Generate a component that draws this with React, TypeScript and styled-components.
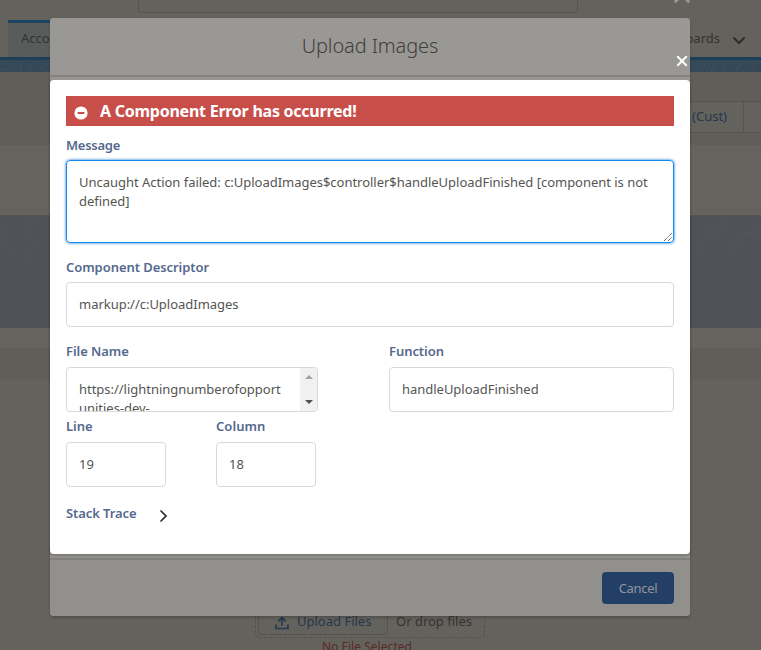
import React from "react";
import styled, { createGlobalStyle } from "styled-components";

const GlobalStyle = createGlobalStyle`
  *, *::before, *::after { box-sizing: border-box; }
  body {
    margin: 0;
    overflow: hidden;
    font-family: "Noto Sans", "Open Sans", sans-serif;
    font-size: 13px;
    line-height: 19px;
    color: #4a4a48;
  }
`;

/* ---------- dimmed page ---------- */

const Screen = styled.div`
  position: relative;
  width: 761px;
  height: 650px;
  overflow: hidden;
  background: #64625d;
`;

const Page = styled.div`
  display: flex;
  flex-direction: column;
  height: 650px;
  > * { flex: none; }
`;

const SearchBar = styled.div`
  display: flex;
  height: 20px;
  padding-left: 138px;
`;

const SearchField = styled.div`
  width: 440px;
  height: 13px;
  border: 1px solid #55544f;
  border-top: 0;
  border-radius: 0 0 4px 4px;
`;

const NavBar = styled.div`
  display: flex;
  justify-content: space-between;
  height: 37px;
  padding: 0 15px 0 8px;
`;

const NavTab = styled.div`
  width: 110px;
  padding: 6px 13px;
  border-top: 3px solid #1d4461;
  background: #595c5a;
  color: #343433;
`;

const NavMenu = styled.div`
  display: flex;
  align-items: center;
  gap: 12px;
  color: #333331;
  svg { display: block; margin-top: 3px; }
`;

const BrandStrip = styled.div`
  height: 15px;
  border-top: 3px solid #1d4059;
  background: #344858;
  svg { display: block; }
`;

const Toolbar = styled.div`
  display: flex;
  justify-content: flex-end;
  height: 73px;
  padding-top: 29px;
  background: #605e59;
`;

const ToolbarCell = styled.div<{ $width: number }>`
  width: ${(p) => p.$width}px;
  height: 32px;
  padding: 5px 16px 0 0;
  border: solid #54534f;
  border-width: 1px 1px 1px 0;
  background: #64625d;
  color: #27374c;
  text-align: right;
  &:last-child { border-right: 0; }
`;

const Band = styled.div<{ $height: number; $color: string; $edge?: string }>`
  height: ${(p) => p.$height}px;
  background: ${(p) => p.$color};
  border-top: 1px solid ${(p) => p.$edge ?? p.$color};
  svg { display: block; }
`;

const UploadArea = styled.div`
  display: flex;
  flex-direction: column;
  align-items: center;
  width: 230px;
  margin: 220px 0 0 255px;
`;

const DropZone = styled.div`
  display: flex;
  gap: 8px;
  width: 230px;
  height: 38px;
  padding: 2px;
  border: 1px dashed #55534f;
  border-radius: 4px;
  color: #343331;
`;

const UploadButton = styled.div`
  display: flex;
  gap: 8px;
  width: 130px;
  height: 32px;
  padding: 8px 0 0 16px;
  border: 1px solid #55534f;
  border-radius: 4px;
  color: #26384f;
  svg { margin-top: 4px; }
`;

const DropHint = styled.span`
  padding-top: 9px;
`;

const UploadError = styled.div`
  margin: -1px 0 0 -6px;
  color: #592a28;
  font-size: 12px;
  letter-spacing: 0.05px;
  white-space: nowrap;
`;

/* ---------- dimmed upload dialog ---------- */

const UploadDialog = styled.section`
  position: absolute;
  left: 50px;
  top: 18px;
  display: flex;
  flex-direction: column;
  justify-content: space-between;
  width: 640px;
  height: 598px;
  border-radius: 4px;
  background: #979592;
  box-shadow: 0 2px 3px rgba(0, 0, 0, 0.2);
`;

const UploadHeader = styled.header`
  height: 59px;
  padding-top: 14px;
  border-bottom: 2px solid #858380;
  border-radius: 4px 4px 0 0;
  background: #9a9895;
  color: #3f3f3d;
  font-size: 20px;
  font-weight: 300;
  letter-spacing: -0.1px;
  line-height: 28px;
  text-align: center;
`;

const UploadFooter = styled.footer`
  display: flex;
  justify-content: flex-end;
  height: 58px;
  padding: 12px 16px;
  border-top: 2px solid #82807d;
  border-radius: 0 0 4px 4px;
  background: #92908d;
`;

const CancelButton = styled.button`
  width: 72px;
  height: 32px;
  padding: 0;
  border: 0;
  border-radius: 4px;
  background: #233f66;
  color: #92969b;
  font: inherit;
  letter-spacing: -0.3px;
`;

const CloseButton = styled.div<{ $left: number; $top: number; $color: string }>`
  position: absolute;
  left: ${(p) => p.$left}px;
  top: ${(p) => p.$top}px;
  color: ${(p) => p.$color};
  svg { display: block; }
`;

/* ---------- error dialog ---------- */

const ErrorDialog = styled.section`
  position: absolute;
  left: 50px;
  top: 80px;
  width: 640px;
  height: 474px;
  padding: 16px;
  border-radius: 4px;
  background: #fff;
  box-shadow: 0 2px 3px rgba(0, 0, 0, 0.2);
`;

const ErrorBanner = styled.div`
  display: flex;
  align-items: center;
  gap: 12px;
  height: 30px;
  padding-left: 8px;
  background: #c84e4a;
  color: #fff;
  font-size: 16px;
  font-weight: 700;
  white-space: nowrap;
  svg { margin-top: 4px; }
`;

const BannerText = styled.span`
  letter-spacing: -0.25px;
`;

const Row = styled.div<{ $gap?: number; $top: number }>`
  display: flex;
  gap: ${(p) => p.$gap ?? 0}px;
  margin-top: ${(p) => p.$top}px;
`;

const Field = styled.div<{ $width: number }>`
  width: ${(p) => p.$width}px;
`;

const Label = styled.div<{ $spacing?: number }>`
  height: 19px;
  color: #54698d;
  font-weight: 600;
  letter-spacing: ${(p) => p.$spacing ?? -0.06}px;
`;

const Box = styled.div<{ $height: number; $focused?: boolean; $top?: number }>`
  position: relative;
  display: flex;
  height: ${(p) => p.$height}px;
  margin-top: ${(p) => p.$top ?? 6}px;
  padding: 12px 0 0 12px;
  border: 1px solid ${(p) => (p.$focused ? "#1589ee" : "#dad9d8")};
  border-radius: 4px;
  box-shadow: ${(p) => (p.$focused ? "0 0 3px #0070d2" : "none")};
  overflow: hidden;
  color: #555552;
  letter-spacing: -0.025px;
  white-space: pre;
`;

const ResizeGrip = styled.svg`
  position: absolute;
  right: 0;
  bottom: 0;
`;

const Scrollbar = styled.div`
  display: flex;
  flex-direction: column;
  justify-content: space-between;
  align-items: center;
  width: 17px;
  height: 43px;
  margin: -12px 0 0 auto;
  padding: 7px 0;
  background: #f1f1f1;
`;

const StackTrace = styled.div`
  display: flex;
  gap: 22px;
  margin-top: 17px;
  svg { margin-top: 5px; }
`;

const CloseIcon = ({ size = 12 }: { size?: number }) => (
  <svg width={size} height={size} viewBox="0 0 12 12" fill="none" stroke="currentColor" strokeWidth="2" strokeLinecap="round">
    <path d="M1.8 1.8 10.2 10.2M10.2 1.8 1.8 10.2" />
  </svg>
);

export default function App() {
  return (
    <Screen>
      <GlobalStyle />
      <Page>
        <SearchBar><SearchField /></SearchBar>
        <NavBar>
          <NavTab>Accounts</NavTab>
          <NavMenu>
            <span>Dashboards</span>
            <svg width="14" height="9" viewBox="0 0 14 9" fill="none" stroke="#2d2d2c" strokeWidth="2" strokeLinecap="round">
              <path d="M2 2l5 5 5-5" />
            </svg>
          </NavMenu>
        </NavBar>
        <BrandStrip>
          <svg width="761" height="12" fill="none" stroke="#435461" strokeWidth="0.7">
            <path d="M0 10c8 2 15-3 18-9M4 3l3 2m4-2l-2 3M24 1c-4 3-4 7-2 11M29 12c1-5 4-9 10-11M39 11l10-9M692 9q6-1 8-8M699 12q2-7 5-11M703 12q2-7 4-11M707 12q2-7 4-11M711 12q2-7 4-11M715 12q2-7 5-11M724 12q0-8 6-11M736 11q0-7 14-9M748 11q9-4 7-10" />
          </svg>
        </BrandStrip>
        <Toolbar>
          <ToolbarCell $width={110}>(Cust)</ToolbarCell>
          <ToolbarCell $width={17} />
        </Toolbar>
        <Band $height={70} $color="#65635e" />
        <Band $height={113} $color="#4f5358" $edge="#54534f">
          <svg width="761" height="70" fill="none" stroke="#52575a" strokeWidth="0.9">
            <path d="M0 9q12 6 4 17l-4 4M7 43q10-24 25 2M26 12q5-8 16-8M29 17q4 14 16 17M697 38q1-25 15-18 8 4 16-15M703 12q15 3 19-8M731 40q0-25 16-24 8 2 14-4M735 32q5-18 26-15" />
            <path d="M27 4q-5 12 5 23M701 31l50-2M727 7h28" strokeDasharray="4 4" />
          </svg>
        </Band>
        <Band $height={20} $color="#65635e" />
        <Band $height={32} $color="#605e59" />
        <UploadArea>
          <DropZone>
            <UploadButton>
              <svg width="14" height="14" viewBox="0 0 14 14" fill="none" stroke="currentColor" strokeWidth="1.7" strokeLinecap="round" strokeLinejoin="round">
                <path d="M1 9v3.5h12V9M7 9V1.8M3.8 4.8 7 1.5l3.2 3.3" />
              </svg>
              <span>Upload Files</span>
            </UploadButton>
            <DropHint>Or drop files</DropHint>
          </DropZone>
          <UploadError>No File Selected</UploadError>
        </UploadArea>
      </Page>

      <CloseButton $left={673} $top={-14} $color="#999793"><CloseIcon size={18} /></CloseButton>
      <UploadDialog>
        <UploadHeader>Upload Images</UploadHeader>
        <UploadFooter><CancelButton>Cancel</CancelButton></UploadFooter>
      </UploadDialog>

      <CloseButton $left={676} $top={55} $color="#fff"><CloseIcon /></CloseButton>
      <ErrorDialog>
        <ErrorBanner>
          <svg width="14" height="14" viewBox="0 0 14 14">
            <circle cx="7" cy="7" r="6.6" fill="#fff" />
            <rect x="3.5" y="6" width="7" height="2" rx="0.8" fill="#c84e4a" />
          </svg>
          <BannerText>A Component Error has occurred!</BannerText>
        </ErrorBanner>

        <Row $top={10}>
          <Field $width={608}>
            <Label $spacing={-0.25}>Message</Label>
            <Box $height={83} $focused $top={5}>
              <span>{"Uncaught Action failed: c:UploadImages$controller$handleUploadFinished [component is not\ndefined]"}</span>
              <ResizeGrip width="12" height="12" viewBox="0 0 12 12" stroke="#555" strokeWidth="1" strokeDasharray="1.2 0.5">
                <path d="M3 11 11 3M7 11l4-4" />
              </ResizeGrip>
            </Box>
          </Field>
        </Row>

        <Row $top={15}>
          <Field $width={608}>
            <Label>Component Descriptor</Label>
            <Box $height={45} $top={5}>markup://c:UploadImages</Box>
          </Field>
        </Row>

        <Row $top={15} $gap={71}>
          <Field $width={252}>
            <Label>File Name</Label>
            <Box $height={45}>
              <span>{"https://lightningnumberofopport\nunities-dev-"}</span>
              <Scrollbar>
                <svg width="8" height="4" viewBox="0 0 8 4"><path d="M0 4 4 0l4 4z" fill="#a3a3a3" /></svg>
                <svg width="8" height="4" viewBox="0 0 8 4"><path d="M0 0h8L4 4z" fill="#505050" /></svg>
              </Scrollbar>
            </Box>
          </Field>
          <Field $width={285}>
            <Label>Function</Label>
            <Box $height={45}>handleUploadFinished</Box>
          </Field>
        </Row>

        <Row $top={5} $gap={50}>
          <Field $width={100}>
            <Label>Line</Label>
            <Box $height={45}>19</Box>
          </Field>
          <Field $width={100}>
            <Label $spacing={0.05}>Column</Label>
            <Box $height={45}>18</Box>
          </Field>
        </Row>

        <StackTrace>
          <Label $spacing={-0.08}>Stack Trace</Label>
          <svg width="9" height="14" viewBox="0 0 9 14" fill="none" stroke="#2b2b2b" strokeWidth="1.7" strokeLinecap="round">
            <path d="M2 2l5 5-5 5" />
          </svg>
        </StackTrace>
      </ErrorDialog>
    </Screen>
  );
}
